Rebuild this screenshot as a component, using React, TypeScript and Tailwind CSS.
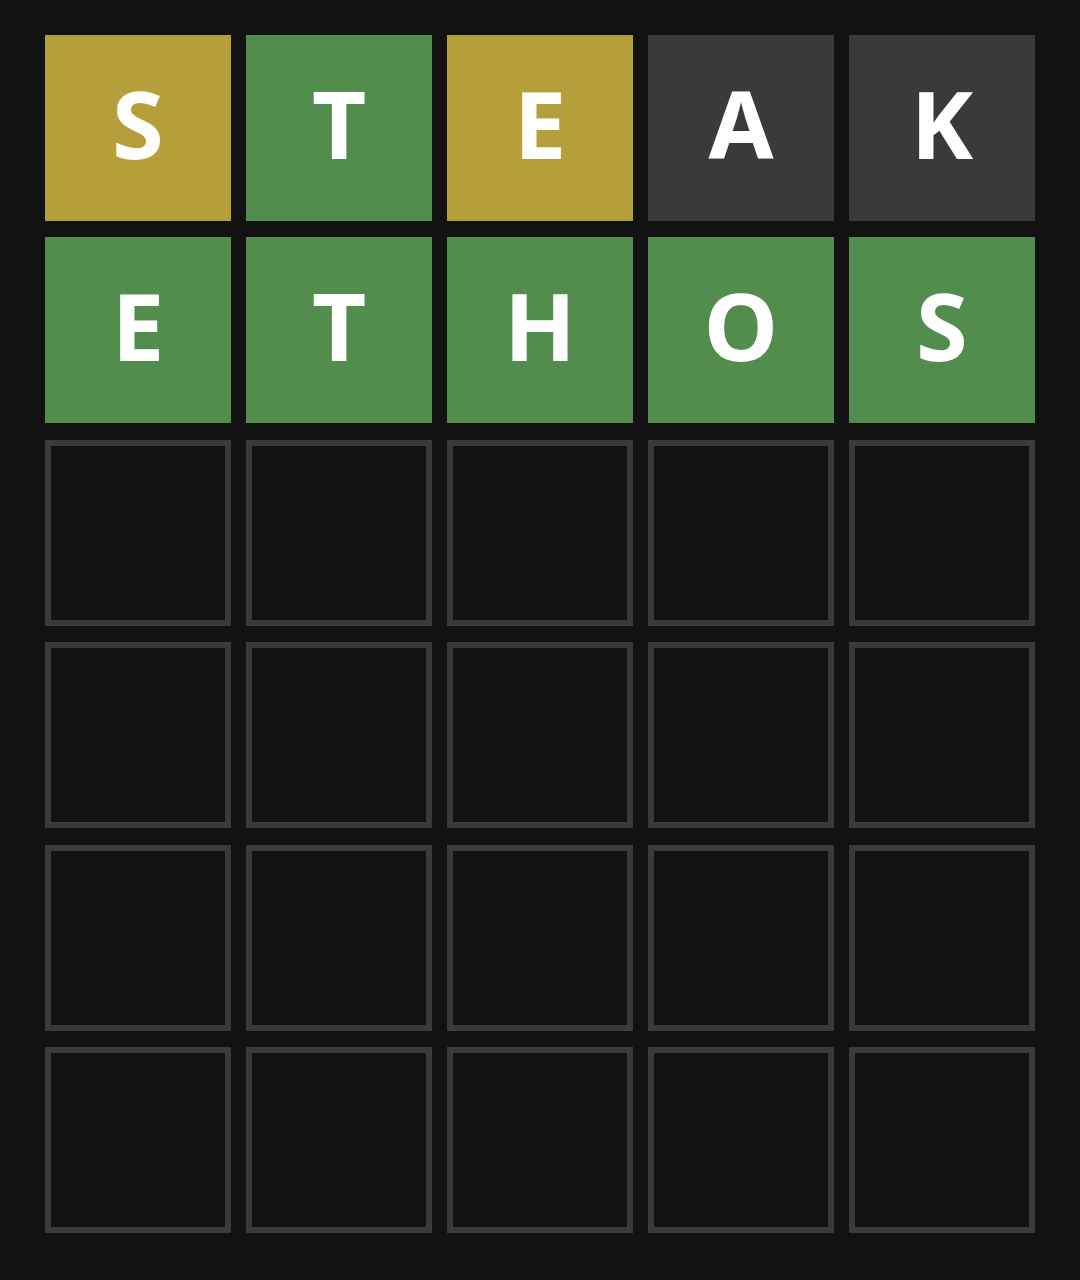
import React from "react";

type T = { l: string; c: "y" | "g" | "d" | "e" };

const rows: T[][] = [
  [
    { l: "S", c: "y" },
    { l: "T", c: "g" },
    { l: "E", c: "y" },
    { l: "A", c: "d" },
    { l: "K", c: "d" },
  ],
  [
    { l: "E", c: "g" },
    { l: "T", c: "g" },
    { l: "H", c: "g" },
    { l: "O", c: "g" },
    { l: "S", c: "g" },
  ],
];

const cls: Record<string, string> = {
  y: "bg-[#b59f3b]",
  g: "bg-[#538d4e]",
  d: "bg-[#3a3a3c]",
  e: "border-[6px] border-[#3a3a3c]",
};

export default function App() {
  const all: T[][] = [...rows];
  while (all.length < 6) all.push(Array.from({ length: 5 }, () => ({ l: "", c: "e" as const })));
  return (
    <div className="w-[1080px] h-[1280px] bg-[#121213] pt-[35px] pl-[45px]">
      <div className="grid grid-cols-[repeat(5,186px)] auto-rows-[186px] gap-x-[15px] gap-y-[16.4px]">
        {all.flat().map((t, i) => (
          <div
            key={i}
            className={`flex items-center justify-center pb-[11px] text-white font-bold text-[94px] leading-none ${cls[t.c]}`}
            style={{ fontFamily: '"Noto Sans", sans-serif' }}
          >
            {t.l}
          </div>
        ))}
      </div>
    </div>
  );
}
